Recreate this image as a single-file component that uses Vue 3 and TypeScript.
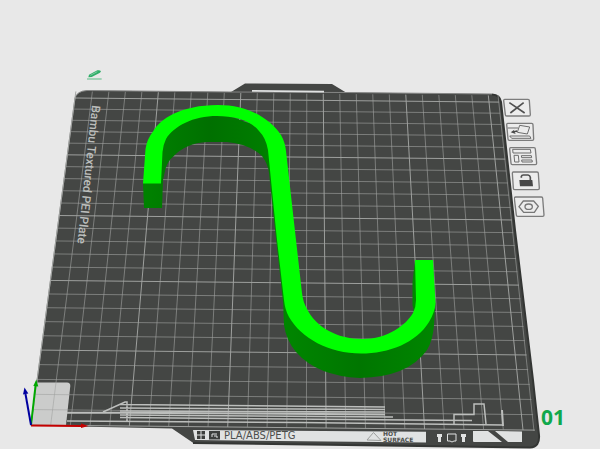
<script setup lang="ts">
interface Line { d: string; major: boolean }
interface Tool { name: string; label: string; x: number; y: number; w: number; h: number }

const CELLS = 25
const EXTENT = 25.6
// Projected corners of the 25 x 25 cell grid: front-left, front-right, back-right, back-left
const corners = [[31, 425], [523, 430], [489, 102], [75, 98]]

function project(u: number, v: number): string {
  const [[x0, y0], [x1, y1], [x2, y2], [x3, y3]] = corners
  const dx1 = x1 - x2, dx2 = x3 - x2, sx = x0 - x1 + x2 - x3
  const dy1 = y1 - y2, dy2 = y3 - y2, sy = y0 - y1 + y2 - y3
  const det = dx1 * dy2 - dx2 * dy1
  const g = (sx * dy2 - dx2 * sy) / det
  const h = (dx1 * sy - sx * dy1) / det
  const s = u / CELLS, t = v / CELLS
  const w = g * s + h * t + 1
  const x = ((x1 - x0 + g * x1) * s + (x3 - x0 + h * x3) * t + x0) / w
  const y = ((y1 - y0 + g * y1) * s + (y3 - y0 + h * y3) * t + y0) / w
  return `${x.toFixed(2)} ${y.toFixed(2)}`
}

const lines: Line[] = []
for (let i = 0; i <= CELLS; i++) {
  const major = i % 5 === 0
  lines.push({ d: `M${project(i, 0)}L${project(i, EXTENT)}`, major })
  lines.push({ d: `M${project(0, i)}L${project(EXTENT, i)}`, major })
}

const W = 600
const H = 449
const tools: Tool[] = [
  { name: 'close', label: 'Delete plate', x: 503, y: 98, w: 28, h: 19 },
  { name: 'orient', label: 'Auto orient', x: 506, y: 122, w: 29, h: 20 },
  { name: 'arrange', label: 'Arrange objects', x: 509, y: 146, w: 29, h: 20 },
  { name: 'lock', label: 'Lock plate', x: 511, y: 171, w: 29, h: 20 },
  { name: 'settings', label: 'Plate settings', x: 514, y: 196, w: 31, h: 22 },
]
const place = (x: number, y: number, w: number, h: number) => ({
  left: `${(x / W) * 100}%`,
  top: `${(y / H) * 100}%`,
  width: `${(w / W) * 100}%`,
  height: `${(h / H) * 100}%`,
})
// Icons are drawn on a canvas three times finer than the scene
const box = (t: Tool) => `${(t.x - 400) * 3} ${(t.y - 70) * 3} ${t.w * 3} ${t.h * 3}`
</script>

<template>
  <main class="viewport">
    <svg class="scene" viewBox="0 0 600 449" role="img" aria-label="S hook on build plate">
      <defs>
        <linearGradient id="inner" x1="0" x2="1">
          <stop offset="0" stop-color="#008200" />
          <stop offset="0.45" stop-color="#007000" />
          <stop offset="0.8" stop-color="#007c00" />
          <stop offset="1" stop-color="#008c00" />
        </linearGradient>
        <linearGradient id="outer" x1="0" x2="1">
          <stop offset="0" stop-color="#008600" />
          <stop offset="0.5" stop-color="#007600" />
          <stop offset="1" stop-color="#008600" />
        </linearGradient>
      </defs>

      <!-- plate -->
      <path class="plate" d="M231 92L245 83.500L332 84L346 92.500L492 94Q500 95 501 102L515 230L533 380L539 435Q540 447 530 447.500L193 442.700L172 428.500L31 425.500L75 98Q77 91 87 90.500Z" />
      <path class="edge" d="M31 425.500L75 98Q77 91 87 90.500L231 92L346 92.500L492 94" />
      <path class="rim" d="M492 94.500Q500 95 501 102L515 230L533 380L539 435Q540 447 530 447.500L193 443" />
      <path class="slot" d="M252 90L324 90.700V92.600L252 91.800Z" />
      <path class="patch" d="M36.500 382.500H67Q70.500 382.500 70.300 386L66 425H31.500Z" />

      <path v-for="(l, i) in lines" :key="i" :d="l.d" :class="l.major ? 'major' : 'minor'" />
      <path class="minor" d="M534 431L498 95" />

      <!-- purge line markings -->
      <g class="marks">
        <path class="thick" d="M67 412.700H120L385 414.500" />
        <path d="M67 421L300 422.500L503 425M103 412L125 402L127 402V421M120 404.500L385 407M120 408L385 409.500M120 411L385 412M120 415L393 417M120 417.500L472 420.500" />
        <path d="M454 424V414.500H474V404H484L486 424" />
        <path class="thick" d="M502 410L503 426" />
      </g>

      <!-- front label strip -->
      <path class="strip" d="M193 430L426 431.700V442.500L195 440Z" />
      <path class="ink" d="M197 431H205V439H197Z M209 431H220V439.500H209Z" />
      <path class="cut" d="M197 435H205M201 431V439M212 437V434H217M214 436H217V438" />
      <text class="material" x="224" y="439">PLA/ABS/PETG</text>
      <path class="tri" d="M367 440L373.500 432.500L381 440.500Z" />
      <text class="hot" x="383" y="436">HOT</text>
      <text class="hot" x="383" y="442">SURFACE</text>
      <path class="strip" d="M437 434H442V437H441V442H438V437H437ZM461 434H466V437H465V442H462V437H461Z" />
      <path class="badge" d="M447.500 434H456V441H454L452 442L450 441H447.500Z" />
      <path class="strip" d="M473 431H488L502 442H474Q473 442 473 441ZM495 431L522 431.500V442H508Z" />

      <text class="plate-name" transform="translate(92 105) rotate(96)">Bambu Textured PEI Plate</text>

      <!-- S hook -->
      <path fill="url(#inner)" d="M143 183L144 208H162L163 180L165.700 168Q168 161 173 156.700Q186 143 207 142H227Q249 144 262 156Q268 164 269 173L274 220L283 302L290 300L275 150L263 128L217 112L175 120L155 150L155 183Z" />
      <path fill="url(#outer)" d="M283 300L284 325Q286 340 296 352Q317 376 360 378Q408 377 427 350Q433 340 434 325L435.300 303L423 315L404 335L361 347L324 338L304 322L292 300Z" />
      <path class="side" d="M415 260L412.500 282V305L414 312L420 300Z" />
      <path class="top" d="M143 183.500L145.500 149Q147 139 153 131.500C160 119 181 105 218 105C251 105 272 121 281 135Q285 142 286 151L296 240L302 293Q303 302 307 309C316 327 337 339 362 339C388 339 406 325 413 313Q416 307 416 300L415 260H433L435.500 303Q435 312 429 322C416 343 389 353.500 361 353.500C329 353.500 301 338 289 317Q285 310 284 300L277 240L268 150Q266 138 259 131C250 120 234 116 217 116C193 116 174 126 166 139Q163 145 162.500 152L161 183.500Z" />

      <!-- origin axes -->
      <g class="axis">
        <path stroke="#c40000" d="M31 425.500L82 426" />
        <path fill="#c40000" d="M81 423.500L88.500 426L81 428Z" />
        <path stroke="#00a800" d="M31 425L35.500 386" />
        <path fill="#00a800" d="M33.300 386L36.300 379.500L38.300 386.500Z" />
        <path stroke="#0000a0" d="M31 425L25.500 394" />
        <path fill="#0000a0" d="M23 394.500L24.500 387.500L28.300 393.500Z" />
      </g>

      <text class="number" x="541" y="425">01</text>
    </svg>

    <button class="tool" type="button" aria-label="Rename plate" :style="place(86, 68, 17, 13)">
      <svg viewBox="258 24 51 39" aria-hidden="true">
        <path class="green-fill" d="M265 52L267 44L292 31Q300 29 303 34L300 38L275 51Z" />
        <path class="green-cut" d="M271 46L292 35" />
        <path class="green-line" d="M261 57L305 57" />
      </svg>
    </button>

    <button v-for="t in tools" :key="t.name" class="tool" type="button" :aria-label="t.label" :style="place(t.x, t.y, t.w, t.h)">
      <svg :viewBox="box(t)" aria-hidden="true">
        <template v-if="t.name === 'close'">
          <path class="frame" d="M314 88H384Q388 88 388 92L391 134Q391 138 387 138H320Q316 138 316 134L311 92Q311 88 314 88Z" />
          <path class="bold" d="M328 98L374 129M371 98L331 129" />
        </template>
        <template v-else-if="t.name === 'orient'">
          <path class="frame" d="M323 160H395Q399 160 399 164L401 207Q401 211 397 211H328Q324 211 324 207L320 164Q320 160 323 160Z" />
          <path class="thin" d="M359 166L389 171L382 192L352 187ZM323 174H354M329 198H389L393 205H335Z" />
          <path class="solid" d="M332 187L343 179L342 183L351 181V186L344 187L347 192Z" />
        </template>
        <template v-else-if="t.name === 'arrange'">
          <path class="frame" d="M332 233H402Q406 233 406 237L410 280Q410 284 406 284H337Q333 284 333 280L329 237Q329 233 332 233Z" />
          <path class="thin" d="M338 238H391L393 249H339ZM342 256H355L357 276H344ZM364 257H394L395 263H365ZM365 270H396L397 276H366Z" />
        </template>
        <template v-else-if="t.name === 'lock'">
          <path class="frame" d="M340 306H411Q415 306 415 310L418 355Q418 359 414 359H344Q340 359 340 355L337 310Q337 306 340 306Z" />
          <path class="solid" d="M358 330H397L399 349H360Z" />
          <path class="bold" d="M364 323V319Q365 315 370 315H384Q390 316 391 322V331" />
        </template>
        <template v-else>
          <path class="frame" d="M347 381H424Q428 381 428 385L432 435Q432 439 428 439H353Q349 439 349 435L343 385Q343 381 347 381Z" />
          <path class="nut" d="M357 410L370 393H401L415 409L403 427H371Z" />
          <ellipse class="nut" cx="386" cy="410" rx="11" ry="8" />
        </template>
      </svg>
    </button>
  </main>
</template>

<style>
body {
  background: #e8e8e8;
}
</style>

<style scoped>
.viewport {
  position: relative;
  overflow: hidden;
  background: #e8e8e8;
  font-family: "DejaVu Sans", sans-serif;
}
.scene {
  display: block;
  width: 100%;
}
.plate { fill: #444644; }
.edge { fill: none; stroke: #858685; stroke-width: 1; }
.rim { fill: none; stroke: #343634; stroke-width: 2; }
.slot, .strip { fill: #e0e2e2; }
.patch { fill: #cbcccb; }
.minor, .major { fill: none; stroke: #a2a4a2; }
.minor { stroke-width: 1; opacity: 0.6; }
.major { stroke-width: 1; opacity: 0.95; }
.marks { fill: none; stroke: #bcbebc; stroke-width: 1.5; }
.marks .thick { stroke-width: 2; }
.ink { fill: #3c3e3c; }
.cut { fill: none; stroke: #e0e2e2; stroke-width: 1; }
.tri { fill: none; stroke: #9c9e9c; stroke-width: 1; }
.badge { fill: none; stroke: #e0e2e2; stroke-width: 1; }
.material { font-size: 10px; fill: #4c4e4c; }
.hot { font-size: 6px; font-weight: bold; fill: #4c4e4c; }
.plate-name { font-family: Roboto, sans-serif; font-size: 12px; font-weight: 500; fill: #bcbebc; }
.side { fill: #008600; }
.top { fill: #00ff00; }
.axis { fill: none; stroke-width: 2; }
.number {
  font-family: "Open Sans", sans-serif;
  font-size: 21px;
  font-weight: bold;
  fill: #10a84c;
}
.tool {
  position: absolute;
  padding: 0;
  border: 0;
  background: none;
  cursor: pointer;
}
.tool svg {
  display: block;
  width: 100%;
  height: 100%;
}
.frame { fill: #ececec; stroke: #7c7c7c; stroke-width: 4; }
.thin { fill: none; stroke: #6c6c6c; stroke-width: 3; }
.bold { fill: none; stroke: #505050; stroke-width: 5; }
.solid { fill: #484848; }
.nut { fill: none; stroke: #777; stroke-width: 4; }
.green-fill { fill: #2fae68; }
.green-cut { fill: none; stroke: #a5dabd; stroke-width: 2; }
.green-line { fill: none; stroke: #5cbd87; stroke-width: 3; }
</style>
